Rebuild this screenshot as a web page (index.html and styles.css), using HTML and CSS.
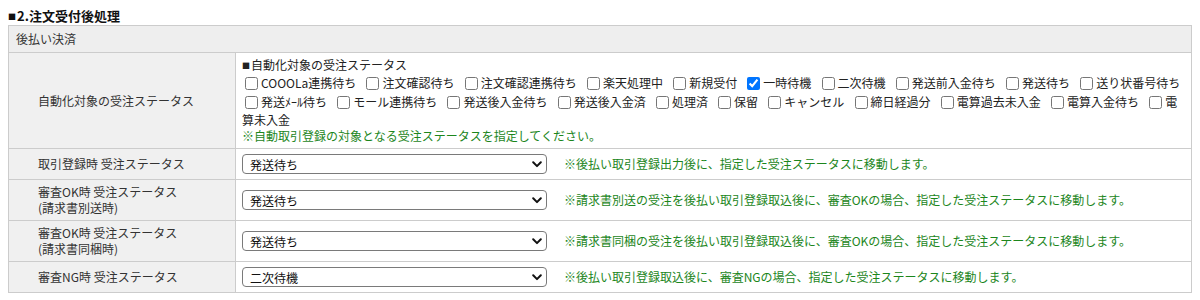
FILE: index.html
```html
<!DOCTYPE html>
<html lang="ja">
<head>
    <meta charset="UTF-8">
    <meta name="viewport" content="width=device-width, initial-scale=1.0">
    <title>注文受付後処理</title>
    <link rel="stylesheet" href="styles.css">
</head>
<body>

<div class="section">
    <h3 class="section-title"><span class="mark">■</span>2.注文受付後処理</h3>

    <table class="setting-table">
        <tr>
            <th colspan="2" class="group-head">後払い決済</th>
        </tr>
        <tr>
            <th class="label">自動化対象の受注ステータス</th>
            <td class="value">
                <div class="sub-title"><span class="mark">■</span>自動化対象の受注ステータス</div>
                <div class="chk-list">
                    <input type="checkbox" id="st1"><label for="st1">COOOLa連携待ち</label>
                    <input type="checkbox" id="st2"><label for="st2">注文確認待ち</label>
                    <input type="checkbox" id="st3"><label for="st3">注文確認連携待ち</label>
                    <input type="checkbox" id="st4"><label for="st4">楽天処理中</label>
                    <input type="checkbox" id="st5"><label for="st5">新規受付</label>
                    <input type="checkbox" id="st6" checked><label for="st6">一時待機</label>
                    <input type="checkbox" id="st7"><label for="st7">二次待機</label>
                    <input type="checkbox" id="st8"><label for="st8">発送前入金待ち</label>
                    <input type="checkbox" id="st9"><label for="st9">発送待ち</label>
                    <input type="checkbox" id="st10"><label for="st10">送り状番号待ち</label>
                    <input type="checkbox" id="st11"><label for="st11">発送ﾒｰﾙ待ち</label>
                    <input type="checkbox" id="st12"><label for="st12">モール連携待ち</label>
                    <input type="checkbox" id="st13"><label for="st13">発送後入金待ち</label>
                    <input type="checkbox" id="st14"><label for="st14">発送後入金済</label>
                    <input type="checkbox" id="st15"><label for="st15">処理済</label>
                    <input type="checkbox" id="st16"><label for="st16">保留</label>
                    <input type="checkbox" id="st17"><label for="st17">キャンセル</label>
                    <input type="checkbox" id="st18"><label for="st18">締日経過分</label>
                    <input type="checkbox" id="st19"><label for="st19">電算過去未入金</label>
                    <input type="checkbox" id="st20"><label for="st20">電算入金待ち</label>
                    <input type="checkbox" id="st21"><label for="st21">電算未入金</label>
                </div>
                <div class="note">※自動取引登録の対象となる受注ステータスを指定してください。</div>
            </td>
        </tr>
        <tr>
            <th class="label">取引登録時 受注ステータス</th>
            <td class="value">
                <div class="field">
                    <span class="select-wrap">
                        <select>
                            <option selected>発送待ち</option>
                            <option>一時待機</option>
                            <option>二次待機</option>
                        </select>
                        <svg class="chevron" width="10" height="7" viewBox="0 0 10 7"><path d="M1.2 1.3 L5 5.1 L8.8 1.3" fill="none" stroke="#111" stroke-width="2" stroke-linecap="round" stroke-linejoin="round"/></svg>
                    </span>
                    <span class="note">※後払い取引登録出力後に、指定した受注ステータスに移動します。</span>
                </div>
            </td>
        </tr>
        <tr>
            <th class="label">審査OK時 受注ステータス<br>(請求書別送時)</th>
            <td class="value">
                <div class="field">
                    <span class="select-wrap">
                        <select>
                            <option selected>発送待ち</option>
                            <option>一時待機</option>
                            <option>二次待機</option>
                        </select>
                        <svg class="chevron" width="10" height="7" viewBox="0 0 10 7"><path d="M1.2 1.3 L5 5.1 L8.8 1.3" fill="none" stroke="#111" stroke-width="2" stroke-linecap="round" stroke-linejoin="round"/></svg>
                    </span>
                    <span class="note">※請求書別送の受注を後払い取引登録取込後に、審査OKの場合、指定した受注ステータスに移動します。</span>
                </div>
            </td>
        </tr>
        <tr>
            <th class="label">審査OK時 受注ステータス<br>(請求書同梱時)</th>
            <td class="value">
                <div class="field">
                    <span class="select-wrap">
                        <select>
                            <option selected>発送待ち</option>
                            <option>一時待機</option>
                            <option>二次待機</option>
                        </select>
                        <svg class="chevron" width="10" height="7" viewBox="0 0 10 7"><path d="M1.2 1.3 L5 5.1 L8.8 1.3" fill="none" stroke="#111" stroke-width="2" stroke-linecap="round" stroke-linejoin="round"/></svg>
                    </span>
                    <span class="note">※請求書同梱の受注を後払い取引登録取込後に、審査OKの場合、指定した受注ステータスに移動します。</span>
                </div>
            </td>
        </tr>
        <tr>
            <th class="label">審査NG時 受注ステータス</th>
            <td class="value">
                <div class="field">
                    <span class="select-wrap">
                        <select>
                            <option>発送待ち</option>
                            <option>一時待機</option>
                            <option selected>二次待機</option>
                        </select>
                        <svg class="chevron" width="10" height="7" viewBox="0 0 10 7"><path d="M1.2 1.3 L5 5.1 L8.8 1.3" fill="none" stroke="#111" stroke-width="2" stroke-linecap="round" stroke-linejoin="round"/></svg>
                    </span>
                    <span class="note">※後払い取引登録取込後に、審査NGの場合、指定した受注ステータスに移動します。</span>
                </div>
            </td>
        </tr>
    </table>
</div>

</body>
</html>
```

FILE: styles.css
```css
body {
    font-family: "Noto Sans CJK JP", "Noto Sans", sans-serif;
    font-size: 12px;
    line-height: 16px;
    color: #222;
    background-color: white;
    margin: 8px;
}

.section-title {
    font-size: 13px;
    font-weight: bold;
    line-height: 16px;
    margin: 0;
    color: #111;
}

/* small square bullet, like the original font draws it */
.mark {
    font-size: 8px;
    margin-right: 1px;
    vertical-align: 1px;
}

.setting-table {
    width: 100%;
    border-collapse: collapse;
    border: 1px solid #cccccc;
}

.setting-table th,
.setting-table td {
    border: 1px solid #cccccc;
    padding: 4px 6px;
    font-weight: normal;
    text-align: left;
}

.group-head {
    background-color: #eeeeee;
    padding: 5px 7px !important;
    color: #333;
}

.label {
    width: 191px;
    background-color: #f0f0f0;
    padding-left: 29px !important;
    vertical-align: middle;
    color: #333;
}

.value {
    background-color: white;
    vertical-align: middle;
}

.chk-list input[type="checkbox"] {
    margin: 3px 3px 3px 3px;
    vertical-align: -2px;
}

.chk-list label {
    margin-right: 4.5px;
}

.note {
    color: #1c861c;
}

.field {
    display: flex;
    align-items: center;
    min-height: 22px;
    gap: 17px;
}

.select-wrap {
    position: relative;
    display: inline-block;
}

.select-wrap select {
    appearance: none;
    -webkit-appearance: none;
    width: 305px;
    height: 20px;
    padding: 0 20px 0 7px;
    margin: 0;
    border: 1px solid #7a7a7a;
    border-radius: 4px;
    background-color: white;
    font-family: inherit;
    font-size: 12px;
    color: #111;
    display: block;
}

.chevron {
    position: absolute;
    right: 5px;
    top: 7px;
    pointer-events: none;
}
```
